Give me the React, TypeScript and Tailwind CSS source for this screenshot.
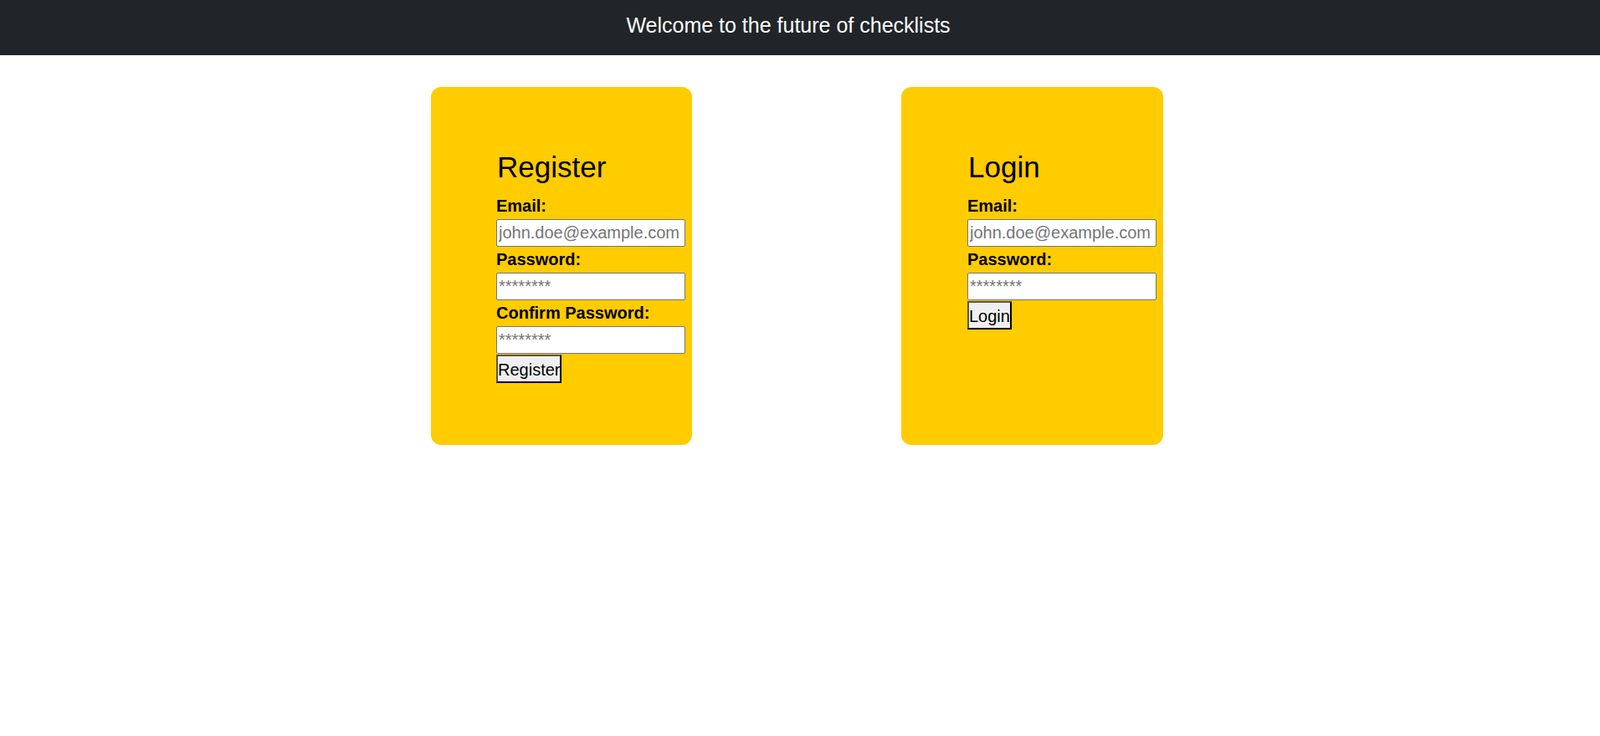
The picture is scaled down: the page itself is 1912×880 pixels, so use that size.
import React from 'react'

function Field({ label, placeholder, type }: { label: string; placeholder: string; type: string }) {
  return (
    <>
      <label className="block h-[23px] mt-[4.5px] first:mt-0 text-[20px] leading-[23px] font-bold text-black">
        {label}
      </label>
      <input
        type={type}
        placeholder={placeholder}
        className="block mt-[3.5px] w-[226px] h-[33px] pl-[2px] pr-[2px] text-[20px] leading-[23px] bg-white border border-[#767676] rounded-[2px] placeholder:text-[#757575] outline-none"
      />
    </>
  )
}

function Card({
  title,
  children,
  button,
  className,
}: {
  title: string
  children: React.ReactNode
  button: string
  className: string
}) {
  return (
    <div className={`h-[428px] rounded-[12px] bg-[#ffcc00] pt-[76px] ${className}`}>
      <h2 className="text-[35px] leading-[39px] font-normal text-black ml-[1px]">{title}</h2>
      <form className="mt-[16px]" onSubmit={(e) => e.preventDefault()}>
        <div>{children}</div>
        <button
          type="submit"
          className="block mt-[1px] h-[34px] px-0 pt-[3px] pb-0 text-[20px] leading-[23px] text-black bg-[#efefef] border-2 border-t-[#555555] border-l-[#555555] border-r-black border-b-black"
        >
          {button}
        </button>
      </form>
    </div>
  )
}

export default function App() {
  return (
    <div className="min-h-[880px] bg-white" style={{ fontFamily: '"Liberation Sans", Arial, sans-serif' }}>
      <header className="h-[66px] bg-[#212529] pt-[16px] pr-[28px] text-center">
        <span className="text-[25px] leading-[28px] text-white">Welcome to the future of checklists</span>
      </header>

      <main className="flex justify-center gap-[250px] pt-[38px] pr-[7px]">
        <Card title="Register" button="Register" className="w-[312px] pl-[78px]">
          <Field label="Email:" placeholder="john.doe@example.com" type="email" />
          <Field label="Password:" placeholder="********" type="password" />
          <Field label="Confirm Password:" placeholder="********" type="password" />
        </Card>
        <Card title="Login" button="Login" className="w-[313px] pl-[79px]">
          <Field label="Email:" placeholder="john.doe@example.com" type="email" />
          <Field label="Password:" placeholder="********" type="password" />
        </Card>
      </main>
    </div>
  )
}
